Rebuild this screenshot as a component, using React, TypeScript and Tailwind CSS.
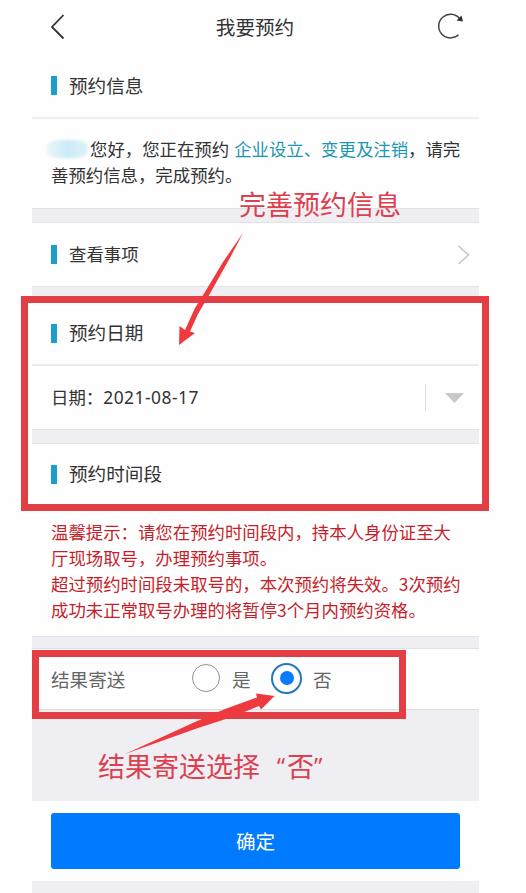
import type { ReactNode } from "react";

function SectionTitle({ children }: { children: ReactNode }) {
  return (
    <div className="flex items-center gap-[12px] text-[18.6px] leading-[26px] text-[#333]">
      <span className="h-[19px] w-[6px] bg-[#1c9fcb]" />
      <span className="-mt-[2px]">{children}</span>
    </div>
  );
}

function Band({ className }: { className: string }) {
  return <div className={`shrink-0 border-y border-[#e3e1e5] bg-[#efeef2] ${className}`} />;
}

function Annotations() {
  return (
    <>
      <div className="absolute left-[21px] top-[296px] h-[215px] w-[468px] border-[7px] border-[#e33e43]" />
      <div className="absolute left-[32px] top-[650px] h-[69px] w-[374px] border-[7px] border-[#e33e43]" />
      <svg className="absolute left-0 top-0" width="526" height="893" viewBox="0 0 526 893" fill="#ee3a3f">
        <path d="M243 233 L223 262 L205 292 L195 308 L185 330 L179.500 326 L179 345 L195 333 L190 331.500 L198 314 L212 290 L231 256 Z" />
        <path d="M125 754 L195 722 L225 709 L257 697.500 L256 693.500 L274.500 696 L261 709.500 L259 706 L232 717 L198 728 Z" />
      </svg>
      <div className="absolute left-[239px] top-[185px] whitespace-nowrap text-[27px] leading-[38px] text-[#dc4050]">
        完善预约信息
      </div>
      <div className="absolute left-[98px] top-[747px] flex whitespace-nowrap text-[27px] leading-[38px] text-[#dc4050]">
        <span>结果寄送选择</span>
        <span className="w-[27px] pr-[2px] text-right font-['Open_Sans',sans-serif] text-[24px]">“</span>
        <span>否</span>
        <span className="w-[27px] font-['Open_Sans',sans-serif] text-[24px]">”</span>
      </div>
    </>
  );
}

export default function App() {
  return (
    <div
      lang="zh-CN"
      className="relative h-[893px] w-[526px] overflow-hidden bg-[#fefefe] font-['Noto_Sans_CJK_SC',sans-serif]"
    >
      <main className="ml-[32px] flex h-[893px] w-[447px] flex-col">
        <header className="flex h-[54px] shrink-0 items-center justify-between pl-[18px] pr-[14px]">
          <svg width="16" height="28" viewBox="0 0 16 28" fill="none" stroke="#333" strokeWidth="1.8">
            <path d="M13.500 2 L2 14 L13.500 25.500" />
          </svg>
          <h1 className="ml-[7px] text-[19.6px] leading-[28px] text-[#333]">我要预约</h1>
          <svg width="28" height="28" viewBox="0 0 28 28" fill="none" stroke="#444" strokeWidth="1.5">
            <path d="M21.500 21.800 A11.800 11.800 0 1 1 22.500 5.500" />
            <path d="M26 8.500 L19.500 7.500 L24.500 2.500 Z" fill="#333" stroke="none" />
          </svg>
        </header>
        <div className="flex h-[65px] shrink-0 items-center border-b-2 border-[#efefef] pl-[19px]">
          <SectionTitle>预约信息</SectionTitle>
        </div>
        <div className="h-[89px] shrink-0 pl-[19px] pt-[17px] text-[17.4px] leading-[26px] text-[#333]">
          <div className="flex whitespace-nowrap">
            <span className="-ml-1 mr-[2px] mt-[4px] h-[18px] w-[41px] rounded-[35%] bg-linear-to-r from-[#eaf5f9] via-[#caebf7] to-[#dff1f8] blur-[1.5px]" />
            <span>您好，您正在预约</span>
            <span className="ml-[5px] text-[#1b96b1]">企业设立、变更及注销</span>
            <span>，请完</span>
          </div>
          <div>善预约信息，完成预约。</div>
        </div>
        <Band className="h-[15px]" />
        <div className="flex h-[63px] shrink-0 items-center justify-between pl-[19px] pr-[9px]">
          <div className="flex items-center gap-[12px] text-[17.4px] leading-[26px] text-[#333]">
            <span className="h-[19px] w-[6px] bg-[#1c9fcb]" />
            <span className="-mt-[2px]">查看事项</span>
          </div>
          <svg width="13" height="20" viewBox="0 0 13 20" fill="none" stroke="#c6c6c6" strokeWidth="1.5">
            <path d="M1.500 1 L11.500 10 L1.500 19" />
          </svg>
        </div>
        <Band className="h-[16px]" />
        <div className="flex h-[64px] shrink-0 items-center border-b-2 border-[#ebebeb] pl-[19px]">
          <SectionTitle>预约日期</SectionTitle>
        </div>
        <div className="flex h-[63px] shrink-0 items-center justify-between pl-[19px] pr-[15px] text-[17.4px] text-[#333]">
          <div>
            日期：<span className="font-['Noto_Sans',sans-serif] tracking-[0.5px]">2021-08-17</span>
          </div>
          <div className="flex items-center gap-[19px]">
            <span className="h-[27px] w-px bg-[#dedede]" />
            <svg width="19" height="10" viewBox="0 0 19 10" fill="#c8c8c8">
              <path d="M0 0 H19 L9.500 10 Z" />
            </svg>
          </div>
        </div>
        <Band className="h-[15px]" />
        <div className="flex h-[60px] shrink-0 items-center pl-[19px]">
          <SectionTitle>预约时间段</SectionTitle>
        </div>
        <div className="h-[132px] shrink-0 whitespace-nowrap pl-[19px] pt-[15px] text-[17.4px] leading-[26px] text-[#c51f2b]">
          <p>温馨提示：请您在预约时间段内，持本人身份证至大</p>
          <p>厅现场取号，办理预约事项。</p>
          <p>超过预约时间段未取号的，本次预约将失效。3次预约</p>
          <p>成功未正常取号办理的将暂停3个月内预约资格。</p>
        </div>
        <Band className="h-[13px]" />
        <div className="flex h-[60px] shrink-0 items-center pl-[19px] text-[18.6px] text-[#666]">
          <span className="w-[141px]">结果寄送</span>
          <span className="-mt-[2px] h-[28px] w-[28px] rounded-full border border-[#929292]" />
          <span className="ml-[12px] w-[39px]">是</span>
          <span className="-mt-[2px] flex h-[31px] w-[31px] items-center justify-center rounded-full border-2 border-[#2179bd]">
            <span className="h-[14px] w-[14px] rounded-full bg-[#087bff]" />
          </span>
          <span className="ml-[11px]">否</span>
        </div>
        <div className="h-[92px] shrink-0 border-t border-[#dedee0] bg-[#efeef2]" />
        <div className="h-[80px] shrink-0 px-[19px] pt-[12px]">
          <button className="block h-[56px] w-full rounded-[3px] bg-[#007aff] text-[19.6px] text-white">确定</button>
        </div>
        <div className="h-[12px] shrink-0 bg-[#efeef2]" />
      </main>
      <Annotations />
    </div>
  );
}
